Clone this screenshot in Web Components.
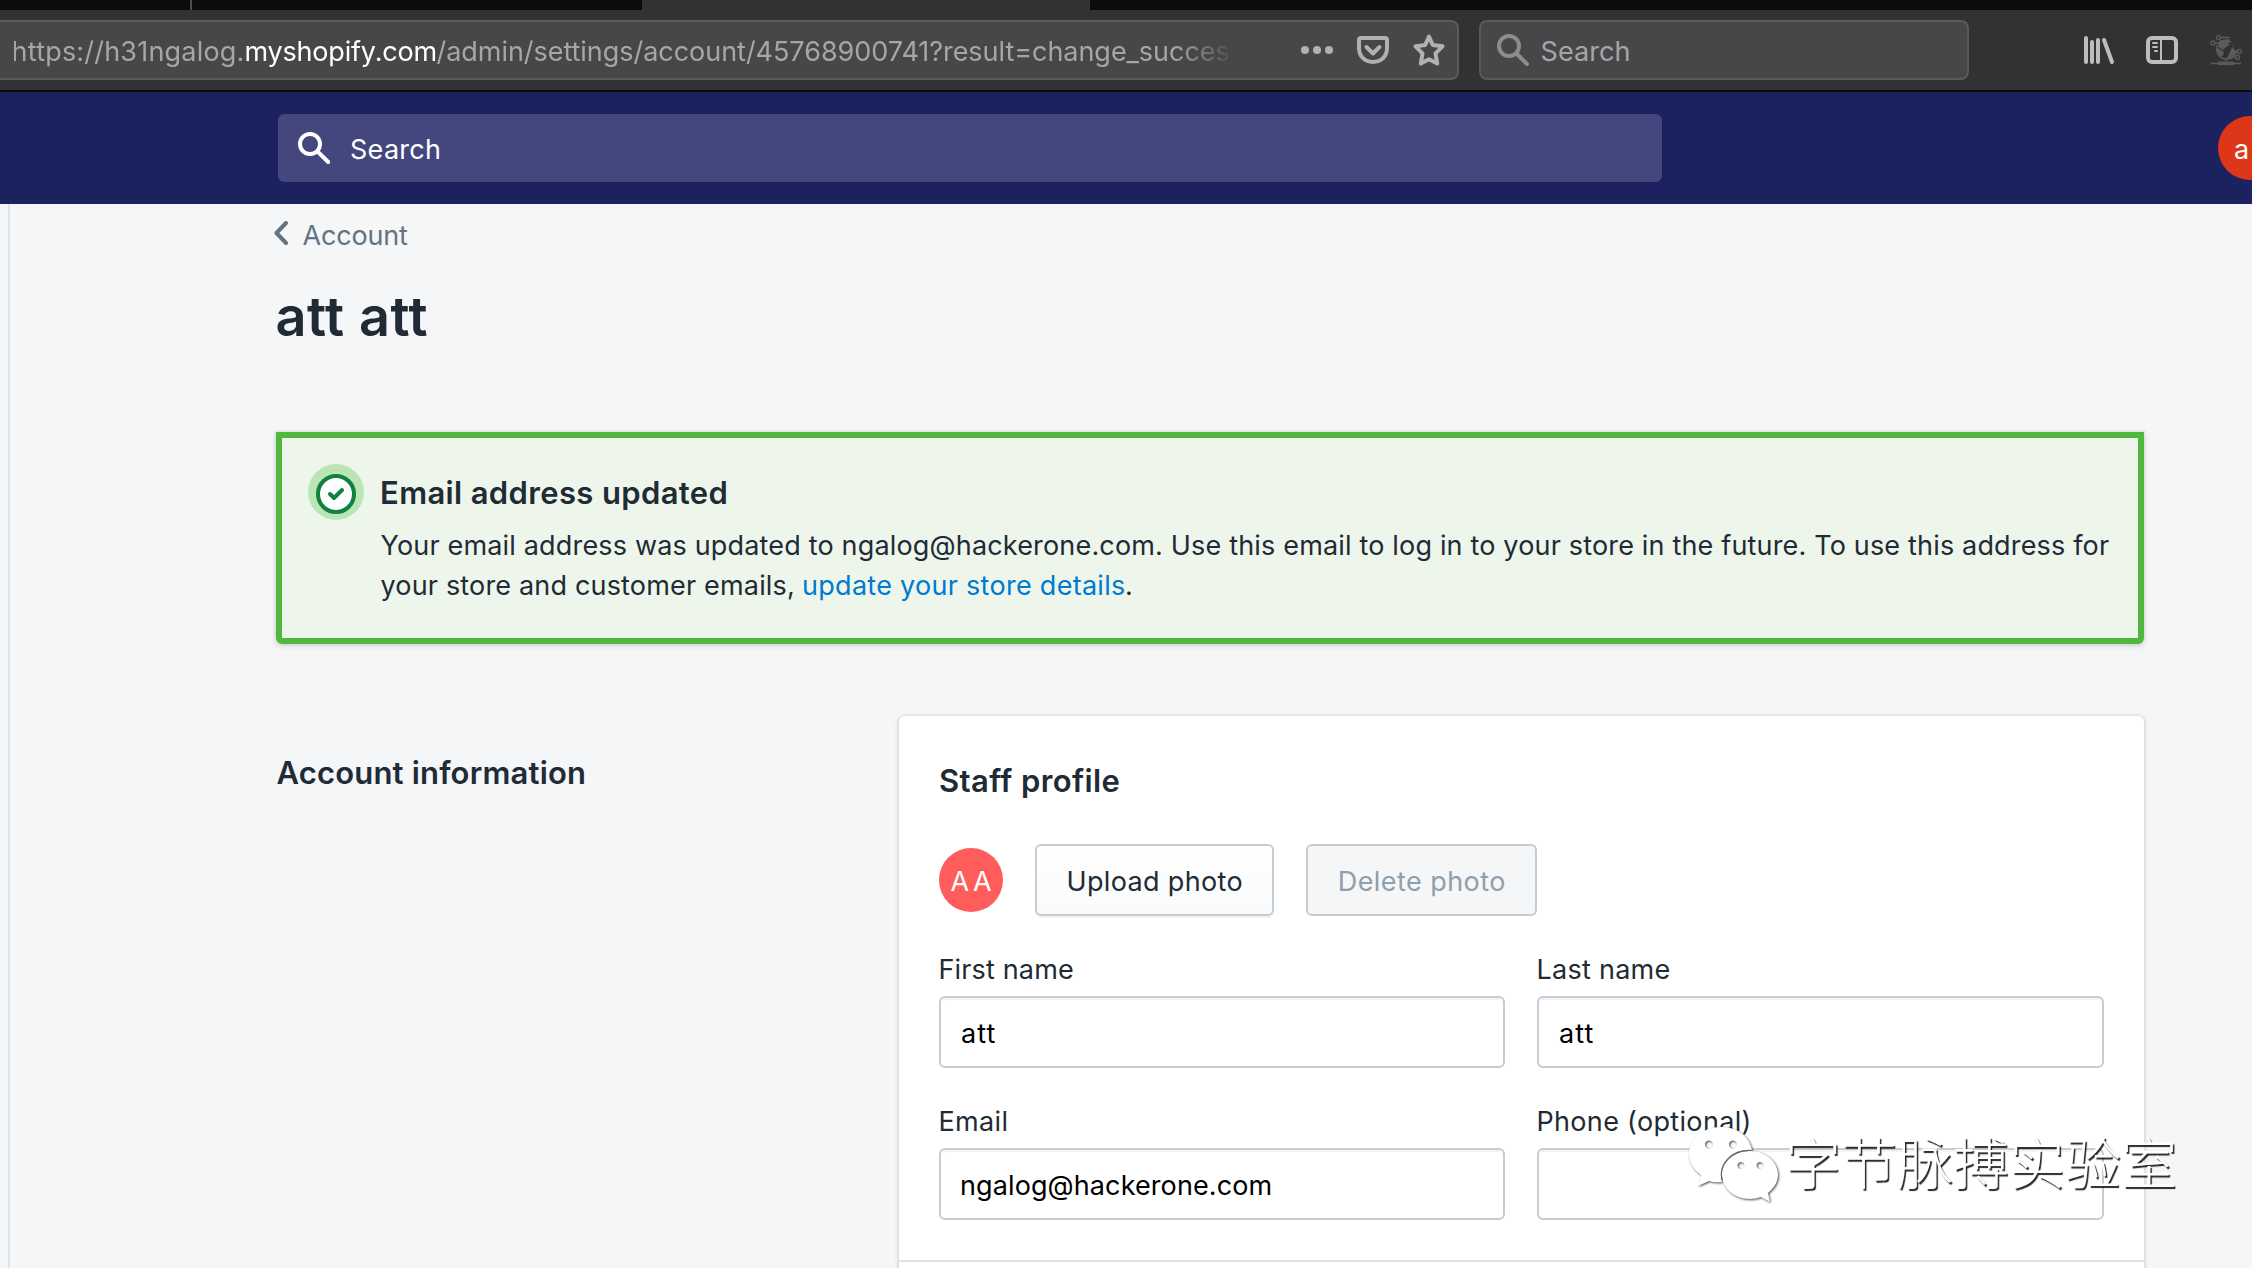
<!DOCTYPE html>
<html lang="en">
<head>
<meta charset="utf-8">
<title>Account settings</title>
<style>
html,body{margin:0;padding:0;background:#f4f6f8}
body{width:2252px;height:1268px;overflow:hidden;font-family:Inter,"Noto Sans CJK SC",sans-serif;font-size:27px;color:#212b36}
</style>
</head>
<body>
<app-page></app-page>
<script>
const define = (name, html, ready) => {
  const t = document.createElement('template');
  t.innerHTML = html;
  customElements.define(name, class extends HTMLElement {
    connectedCallback() {
      if (this.shadowRoot) return;
      this.attachShadow({mode: 'open'}).append(t.content.cloneNode(true));
      if (ready) ready(this, this.shadowRoot);
    }
  });
};

/* One line of text tracked so that its ink spans the given width. */
const ctx = document.createElement('canvas').getContext('2d');
define('text-line', `<style>:host{display:block;flex:none;white-space:pre;line-height:42px;height:40px}:host([size="31"]){line-height:40px}span{display:block}</style><span><slot></slot></span>`, (el, root) => {
  const size = el.getAttribute('size') || '27', weight = el.getAttribute('weight') || '400';
  const w = parseFloat(el.getAttribute('w')), text = el.textContent;
  ctx.font = weight + ' ' + size + 'px Inter';
  const m = ctx.measureText(text);
  const ink = m.actualBoundingBoxRight + m.actualBoundingBoxLeft;
  el.style.fontSize = size + 'px';
  el.style.fontWeight = weight;
  el.style.width = w + 'px';
  const s = root.querySelector('span');
  s.style.marginLeft = m.actualBoundingBoxLeft + 'px';
  if (text.length > 1) s.style.letterSpacing = ((w - ink) / (text.length - 1)).toFixed(3) + 'px';
});

define('tab-strip', `<style>:host{display:flex;height:10px;background:#0c0c0d}i{display:block}</style>
<i style="width:190px"></i><i style="width:2px;background:#4c4c4e"></i><i style="width:450px"></i><i style="width:448px;background:#323234"></i>`);

define('chrome-field', `<style>:host{display:flex;align-items:center;box-sizing:border-box;height:60px;background:#474749;border:2px solid #5a5a5c;border-radius:8px;color:#a6a6a8;flex:none}
:host([kind=url]){width:1459px;border-left:0;border-radius:0 8px 8px 0;padding-left:13.6px}
:host([kind=search]){width:490px;padding-left:16px}</style><slot></slot>`);

define('url-text', `<style>:host{display:flex;width:1230px;flex:none;padding-top:2px;-webkit-mask-image:linear-gradient(90deg,#000 1160px,transparent 1222px);mask-image:linear-gradient(90deg,#000 1160px,transparent 1222px)}
.d{color:#fff}</style>
<text-line w="229">https://h31ngalog.</text-line><text-line class="d" w="189" style="margin-left:3.900px">myshopify.com</text-line><text-line w="792" style="margin-left:1px">/admin/settings/account/45768900741?result=change_succes</text-line>`);

define('browser-chrome', `<style>:host{display:block;height:92px;flex:none}
.bar{display:flex;height:80px;box-sizing:border-box;padding:10px 0;background:#323234;border-bottom:0}
.edge{height:2px;background:#0c0c0d}
svg{display:block;flex:none}
.tools{display:flex;align-items:center;margin-left:114px;gap:32px;height:60px}</style>
<tab-strip></tab-strip>
<div class="bar">
 <chrome-field kind="url"><url-text></url-text>
  <svg style="margin-left:57px" width="32" height="32" viewBox="0 0 32 32" fill="#b1b1b3"><circle cx="4" cy="16" r="4"/><circle cx="16" cy="16" r="4"/><circle cx="28" cy="16" r="4"/></svg>
  <svg style="margin-left:24px" width="32" height="32" viewBox="0 0 32 32" fill="none" stroke="#b1b1b3" stroke-width="4" stroke-linejoin="round" stroke-linecap="round"><path d="M4 4H28Q30 4 30 6V14C30 22.500 24 28 16 28S2 22.500 2 14V6Q2 4 4 4Z"/><path d="M9.500 13L16 19.500L22.500 13"/></svg>
  <svg style="margin-left:24px" width="32" height="32" viewBox="0 0 32 32" fill="none" stroke="#b1b1b3" stroke-width="4" stroke-linejoin="round"><path d="M16 2.500L19.800 11L29.500 12.300L22.500 19.300L24.200 29.500L16 25.300L7.800 29.500L9.500 19.300L2.500 12.300L12.200 11Z"/></svg>
 </chrome-field>
 <chrome-field kind="search" style="margin-left:20px">
  <svg width="32" height="32" viewBox="0 0 32 32" fill="none" stroke="#8d8d8f" stroke-width="4" stroke-linecap="round"><circle cx="12" cy="12" r="10"/><path d="M19.500 19.500L30 30"/></svg>
  <text-line w="87" style="margin-left:12.500px;padding-top:2px">Search</text-line>
 </chrome-field>
 <div class="tools">
  <svg width="32" height="32" viewBox="0 0 32 32" fill="none" stroke="#bdbdbf" stroke-width="4" stroke-linecap="round"><path d="M3 4V28M9 8V28M15 6V28M21 6L29 28"/></svg>
  <svg style="margin-left:-1px" width="32" height="32" viewBox="0 0 32 32"><rect x="2" y="4" width="28" height="24" rx="4" fill="none" stroke="#bdbdbf" stroke-width="4"/><path d="M15 4V28" stroke="#bdbdbf" stroke-width="2"/><path d="M7 9H11M7 13H11M9 17H11" stroke="#bdbdbf" stroke-width="2" stroke-linecap="round"/></svg>
  <svg width="32" height="32" viewBox="0 0 32 32" fill="none" stroke="#5b5b5d" stroke-width="1.300"><circle cx="8.500" cy="3.500" r="2"/><circle cx="2.800" cy="9" r="2"/><circle cx="29.500" cy="17.500" r="2"/><circle cx="27.500" cy="23.500" r="2"/><path d="M10.500 3.500H20M5 9H9L11 6M27.500 17.500H24M25.500 23.500H20"/><path d="M1 29.500H31M16 24V29"/><rect x="9" y="28.200" width="14" height="2.200" fill="#5b5b5d"/><path d="M7 11C5 18 9 25 16 25S26 21 27 16"/><path fill="#5b5b5d" stroke="none" d="M12 6L18 5L22 8L18 9L20 11L16 13L13 16L8 13Q8 8 12 6ZM7 14L13 17L14 20L11 23Q6 20 7 14ZM17 24L20 18L22 13L26 17Q25 23 17 25ZM22 10L24 12L23 13Z"/></svg>
 </div>
</div>
<div class="edge"></div>`);

define('user-avatar', `<style>:host{display:flex;width:64px;height:64px;border-radius:50%;align-items:center;box-sizing:border-box;color:#fff;flex:none}</style><slot></slot>`);

define('top-bar', `<style>:host{display:flex;height:112px;background:#1c2260;box-sizing:border-box;align-items:center;padding-left:278px;flex:none;overflow:hidden}
.s{display:flex;align-items:center;width:1384px;height:68px;border-radius:6px;background:#44467e;color:#fff;box-sizing:border-box;padding-left:20px;flex:none}
user-avatar{margin-left:556px;background:#de3618;padding:2px 0 0 17px}</style>
<div class="s"><svg width="32" height="32" viewBox="0 0 32 32" fill="none" stroke="#fff" stroke-width="4" stroke-linecap="round"><circle cx="12" cy="12" r="10"/><path d="M19.500 19.500L30.200 30"/></svg>
<text-line w="88" style="margin-left:21px;padding-top:2px">Search</text-line></div>
<user-avatar><text-line w="31">aa</text-line></user-avatar>`);

define('page-header', `<style>:host{display:block;padding:11px 0 0 8px}
.b{display:flex;height:40px;color:#637381}svg{margin-top:6px}
h1{margin:0;font:inherit;padding:31px 0 0 3.500px}h1 text-line{height:60px;line-height:62px}</style>
<div class="b"><svg width="14" height="24" viewBox="0 0 14 24" fill="none" stroke="#637381" stroke-width="4" stroke-linecap="round" stroke-linejoin="round"><path d="M12 2L2.500 12L12 22"/></svg><text-line w="105.500" style="margin-left:14.500px">Account</text-line></div>
<h1><text-line size="54" weight="600" w="150">att att</text-line></h1>`);

define('success-banner', `<style>:host{display:flex;box-sizing:border-box;width:1868px;height:212px;border:6px solid #50b83c;border-radius:0 0 6px 6px;background:#eef6eb;padding:26px;margin:86px 0 0 10px;box-shadow:0 0 0 2px rgba(63,63,68,.05),0 2px 6px rgba(63,63,68,.15)}
svg{flex:none}.c{margin-left:17px;padding-top:9px}.l{display:flex}.k{color:#007ace}</style>
<svg width="56" height="56" viewBox="0 0 56 56"><circle cx="28" cy="28" r="28" fill="#bbe5b3"/><circle cx="28" cy="30" r="18" fill="#fff" stroke="#108043" stroke-width="4"/><path d="M22 30L26 34L34 26" fill="none" stroke="#108043" stroke-width="4" stroke-linecap="round" stroke-linejoin="round"/></svg>
<div class="c"><text-line size="31" weight="600" w="344.500" style="margin-left:1px">Email address updated</text-line>
<text-line w="1728.500" style="margin-top:12px;margin-left:-.5px">Your email address was updated to ngalog@hackerone.com. Use this email to log in to your store in the future. To use this address for</text-line>
<div class="l" style="margin-left:-.5px"><text-line w="412.500">your store and customer emails,</text-line><text-line class="k" w="320" style="margin-left:11px">update your store details</text-line><text-line w="4" style="margin-left:3px">.</text-line></div></div>`);

define('push-button', `<style>:host{display:flex;align-items:center;justify-content:center;box-sizing:border-box;height:72px;border:2px solid #c4cdd5;border-radius:6px;background:linear-gradient(#fff,#f9fafb);box-shadow:0 2px 0 rgba(22,29,37,.05);padding:2px 0 0 1px;flex:none}
:host([disabled]){background:#f4f6f8;color:#919eab;box-shadow:none}</style><slot></slot>`);

define('form-field', `<style>:host{display:block;padding-top:33px}
.i{margin-top:7px;box-sizing:border-box;height:72px;border:2px solid #c4cdd5;border-radius:6px;background:#fff;box-shadow:inset 0 2px 0 rgba(99,115,129,.08);color:#000;display:flex;align-items:center;padding:2px 0 0 21px}
::slotted([slot=label]){margin-left:1.500px}</style><slot name="label"></slot><div class="i"><slot></slot></div>`);

define('profile-card', `<style>:host{display:block;box-sizing:border-box;width:1245px;height:700px;background:#fff;border-radius:6px;box-shadow:0 0 0 2px rgba(63,63,68,.05),0 2px 6px rgba(63,63,68,.15);flex:none}
.in{height:544px;box-sizing:border-box;padding:45px 40px 0;}
.r{display:flex;align-items:center;gap:32px;margin-top:43px}
.f{display:grid;grid-template-columns:566px 567px;column-gap:32px}
.d{height:2px;background:#dfe3e8}
user-avatar{background:#ff5c5c;padding:2px 0 0 11.500px}</style>
<div class="in"><text-line size="31" weight="600" w="179.500" style="margin-left:1px">Staff profile</text-line>
<div class="r"><user-avatar><text-line w="40.500">AA</text-line></user-avatar>
<push-button style="width:239px"><text-line w="173">Upload photo</text-line></push-button>
<push-button disabled style="width:231px"><text-line w="164.500">Delete photo</text-line></push-button></div>
<div class="f">
<form-field><text-line slot="label" w="132.500">First name</text-line><text-line w="33.500">att</text-line></form-field>
<form-field><text-line slot="label" w="131">Last name</text-line><text-line w="33.500">att</text-line></form-field>
<form-field><text-line slot="label" w="66">Email</text-line><text-line w="308.500">ngalog@hackerone.com</text-line></form-field>
<form-field><text-line slot="label" w="210">Phone (optional)</text-line></form-field>
</div></div><div class="d"></div>`);

define('water-mark', `<style>:host{position:absolute;left:1686px;top:1122px;display:flex;color:#fff;pointer-events:none}
svg{flex:none;overflow:visible;filter:drop-shadow(1px 1px .8px rgba(0,0,0,.7))}
span{font:300 56px/80px "Noto Sans CJK SC",sans-serif;white-space:nowrap;margin-left:3px;margin-top:-2px;text-shadow:1.500px 1.500px 1px rgba(0,0,0,.85)}</style>
<svg width="96" height="84" viewBox="0 0 96 84"><path fill="#fff" fill-rule="evenodd" d="M66 28C63 13 50 5 35 5C17 5 3 17 3 32C3 41 8 48 15 53L12 64L23 59Q29 61 36 60C31 43 47 27 66 28ZM23 18.500a4 4 0 1 1-.1 0ZM47 18.500a4 4 0 1 1-.1 0Z"/><path fill="#fff" fill-rule="evenodd" d="M64 29C48 29 36 40 36 53S48 77 64 77Q70 77 75 75L84 80L82 71C88 66 92 60 92 53C92 40 80 29 64 29ZM55 40a3.500 3.500 0 1 1-.1 0ZM74 40a3.500 3.500 0 1 1-.1 0Z"/><path d="M66 28.500C46 27 32 42 36 58" fill="none" stroke="#666" stroke-width="1.200"/></svg>
<span>字节脉搏实验室</span>`);

define('app-page', `<style>:host{display:flex;flex-direction:column;position:relative;width:2252px;height:1268px;overflow:hidden;background:#f4f6f8}
.m{display:flex;flex:1;min-height:0;overflow:hidden}.n{width:8px;border-right:2px solid #dfe3e8;flex:none}
.p{padding-left:256px;flex:none}.s{display:flex;padding-top:72px;margin-left:10px}.a{width:623px;box-sizing:border-box;padding:37px 0 0 .5px}</style>
<browser-chrome></browser-chrome><top-bar></top-bar>
<div class="m"><div class="n"></div><div class="p"><page-header></page-header><success-banner></success-banner>
<div class="s"><div class="a"><text-line size="31" weight="600" w="307.500">Account information</text-line></div><profile-card></profile-card></div></div></div>
<water-mark></water-mark>`);
</script>
</body>
</html>
